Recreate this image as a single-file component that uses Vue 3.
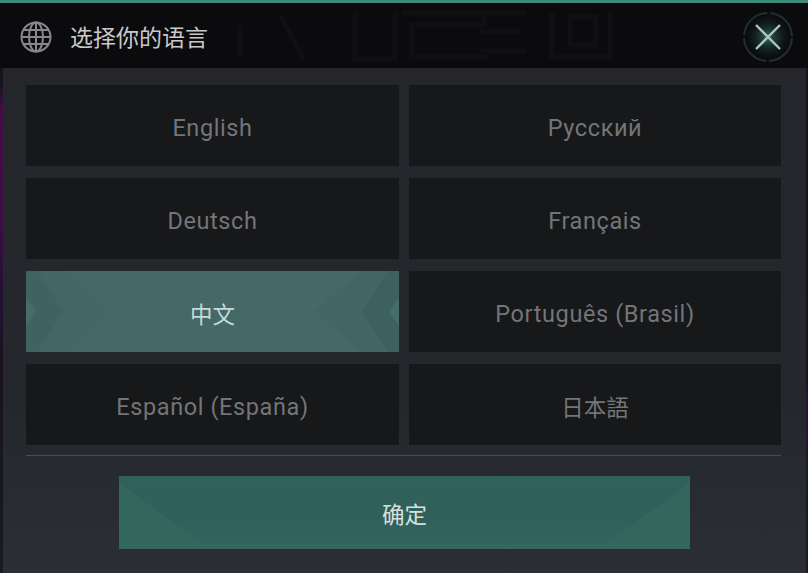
<script setup>
const languages = [
  { label: 'English' },
  { label: 'Русский' },
  { label: 'Deutsch' },
  { label: 'Français' },
  { label: '中文', active: true, cjk: true },
  { label: 'Português (Brasil)' },
  { label: 'Español (España)' },
  { label: '日本語', cjk: true },
]
</script>

<template>
  <div class="dialog">
    <header class="head">
      <svg class="art" viewBox="0 0 460 65" fill="none" stroke="#101013" stroke-width="5" aria-hidden="true">
        <path d="M60 22v32M100 12l24 44M175 10v46h40V10M222 10h82v12h-72v32h76M300 10h46M300 28h40M300 48h46M372 10v44h58V10M390 14h26v28h-26z" />
      </svg>
      <svg class="globe" viewBox="0 0 32 32" fill="none" stroke="#87888a" stroke-width="2">
        <circle cx="16" cy="16" r="14.5" />
        <ellipse cx="16" cy="16" rx="7" ry="14.5" />
        <path d="M16 1.5v29M1.5 16h29M3.5 9h25M3.5 23h25" />
      </svg>
      <h1 class="title">选择你的语言</h1>
      <button class="close" aria-label="关闭">
        <svg viewBox="0 0 52 52" fill="none">
          <defs>
            <radialGradient id="glow">
              <stop offset="0" stop-color="#3c8274" stop-opacity=".75" />
              <stop offset=".6" stop-color="#1c3431" stop-opacity=".45" />
              <stop offset="1" stop-color="#12201f" stop-opacity="0" />
            </radialGradient>
          </defs>
          <circle cx="26" cy="26" r="23" fill="url(#glow)" />
          <circle cx="26" cy="26" r="24" stroke="#1f302d" stroke-width="2" stroke-dasharray="34.7 3" stroke-dashoffset="-1.5" />
          <path d="M14 14l24 24M38 14L14 38" stroke="#a9c8c0" stroke-width="2.4" />
        </svg>
      </button>
    </header>

    <div class="grid">
      <button v-for="lang in languages" :key="lang.label" class="lang" :class="{ active: lang.active, cjk: lang.cjk }">
        <svg v-if="lang.active" class="chev" viewBox="0 0 373 82" preserveAspectRatio="none">
          <path d="M0 0h39l45 41-45 41H0z" fill="#426765" />
          <path d="M0 0h11l26 41-26 41H0z" fill="#3e6360" />
          <path d="M0 26l10 15-10 15z" fill="#466d6a" />
          <path d="M373 0h-39l-45 41 45 41h39z" fill="#416664" />
          <path d="M373 0h-11l-26 41 26 41h11z" fill="#3c615e" />
          <path d="M373 26l-10 15 10 15z" fill="#466d6a" />
        </svg>
        <span class="label">{{ lang.label }}</span>
      </button>
    </div>

    <div class="rule"></div>

    <div class="foot">
      <button class="confirm">确定</button>
    </div>
  </div>
</template>

<style>
html, body { margin: 0; background: #22252a; }
</style>

<style scoped>
.dialog {
  position: relative;
  width: 808px;
  height: 573px;
  overflow: hidden;
  box-sizing: border-box;
  border-top: 3px solid #3c8a78;
  background: linear-gradient(180deg, #25262c 0%, #24272b 70%, #2b2f34 100%);
  font-family: "Roboto", "Noto Sans CJK SC", sans-serif;
}
.dialog::before {
  content: "";
  position: absolute;
  left: 0;
  top: 65px;
  bottom: 0;
  width: 3px;
  background: linear-gradient(180deg, #14151b 0, #14151b 3%, #420d49 8%, #3d0c46 30%, #221033 45%, #181419 60%, #1a1a22 100%);
}
.dialog::after {
  content: "";
  position: absolute;
  right: 0;
  top: 65px;
  bottom: 0;
  width: 2px;
  background: linear-gradient(180deg, #15161b 0, #15161b 62%, #2e1040 66%, #2e1040 72%, #191b20 78%, #191b20 100%);
}
.head {
  position: relative;
  height: 65px;
  display: flex;
  align-items: center;
  padding: 0 14px 0 20px;
  background: #0b0b0e;
}
.art {
  position: absolute;
  left: 180px;
  top: 0;
  width: 460px;
  height: 65px;
}
.globe { position: relative; width: 32px; height: 32px; flex: none; margin-top: 2px; }
.title {
  position: relative;
  margin: 1px 0 0 18px;
  flex: 1;
  font: 400 23px "Noto Sans CJK SC", sans-serif;
  color: #c9c9ca;
}
.close {
  position: relative;
  width: 52px;
  height: 52px;
  margin-top: 3px;
  padding: 0;
  border: 0;
  background: none;
}
.close svg { display: block; }
.grid {
  display: grid;
  grid-template-columns: 373px 372px;
  grid-auto-rows: 81px;
  gap: 12px 10px;
  margin: 17px 0 0 26px;
}
.lang {
  position: relative;
  padding: 4px 0 0;
  border: 0;
  background: #17181a;
  color: #737578;
  font: 400 23.5px "Roboto", "Noto Sans CJK SC", sans-serif;
  letter-spacing: .6px;
}
.lang.cjk {
  padding: 2px 0 0;
  font-size: 22.5px;
  letter-spacing: 0;
}
.lang.active {
  background: #446967;
  color: #c9d8d6;
}
.chev { position: absolute; inset: 0; width: 100%; height: 100%; }
.label { position: relative; }
.rule {
  height: 1px;
  margin: 10px 27px 0 26px;
  background: #494b50;
}
.foot {
  display: flex;
  justify-content: center;
  padding: 20px 0 0 1px;
}
.confirm {
  width: 571px;
  height: 73px;
  padding: 0;
  border: 0;
  background:
    linear-gradient(to top right, #33665d 50%, transparent 50.5%) left bottom / 90px 66px no-repeat,
    linear-gradient(to top left, #33665d 50%, transparent 50.5%) right bottom / 90px 66px no-repeat,
    linear-gradient(180deg, #31615a 0%, #30605a 60%, #33675e 100%);
  color: #d7e0de;
  font: 400 22.5px "Noto Sans CJK SC", sans-serif;
}
</style>
